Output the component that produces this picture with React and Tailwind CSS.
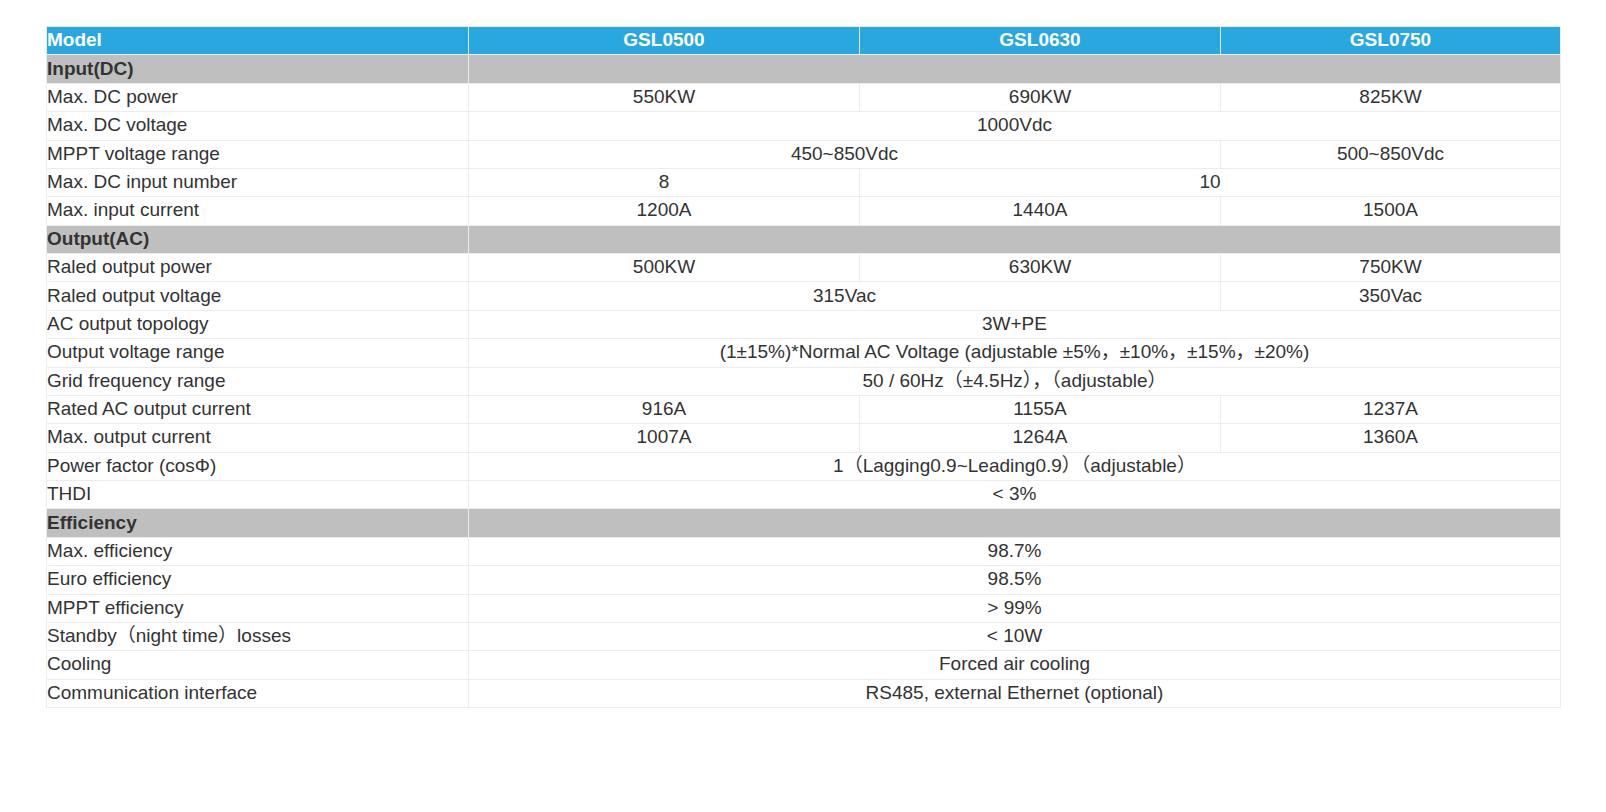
import React from "react";

const rows = [
  { section: "Input(DC)" },
  { label: "Max. DC power", cells: [["550KW", 1], ["690KW", 1], ["825KW", 1]] },
  { label: "Max. DC voltage", cells: [["1000Vdc", 3]] },
  { label: "MPPT voltage range", cells: [["450~850Vdc", 2], ["500~850Vdc", 1]] },
  { label: "Max. DC input number", cells: [["8", 1], ["10", 2]] },
  { label: "Max. input current", cells: [["1200A", 1], ["1440A", 1], ["1500A", 1]] },
  { section: "Output(AC)" },
  { label: "Raled output power", cells: [["500KW", 1], ["630KW", 1], ["750KW", 1]] },
  { label: "Raled output voltage", cells: [["315Vac", 2], ["350Vac", 1]] },
  { label: "AC output topology", cells: [["3W+PE", 3]] },
  {
    label: "Output voltage range",
    cells: [["(1±15%)*Normal AC Voltage (adjustable ±5%，±10%，±15%，±20%)", 3]],
  },
  { label: "Grid frequency range", cells: [["50 / 60Hz（±4.5Hz），（adjustable）", 3]] },
  { label: "Rated AC output current", cells: [["916A", 1], ["1155A", 1], ["1237A", 1]] },
  { label: "Max. output current", cells: [["1007A", 1], ["1264A", 1], ["1360A", 1]] },
  { label: "Power factor (cosΦ)", cells: [["1（Lagging0.9~Leading0.9）（adjustable）", 3]] },
  { label: "THDI", cells: [["< 3%", 3]] },
  { section: "Efficiency" },
  { label: "Max. efficiency", cells: [["98.7%", 3]] },
  { label: "Euro efficiency", cells: [["98.5%", 3]] },
  { label: "MPPT efficiency", cells: [["> 99%", 3]] },
  { label: "Standby（night time）losses", cells: [["< 10W", 3]] },
  { label: "Cooling", cells: [["Forced air cooling", 3]] },
  { label: "Communication interface", cells: [["RS485, external Ethernet (optional)", 3]] },
];

const cell = "border border-[#ececec] px-0 pt-0 pb-[2px] align-middle leading-none";

export default function App() {
  return (
    <div className="min-h-[812px] bg-white pt-[26px] pl-[46px] font-['Liberation_Sans','Noto_Sans_CJK_SC',Arial,sans-serif] text-[19px] text-[#333]">
      <table className="w-[1514px] table-fixed border-collapse">
        <colgroup>
          <col className="w-[422px]" />
          <col className="w-[391px]" />
          <col className="w-[361px]" />
          <col className="w-[340px]" />
        </colgroup>
        <thead>
          <tr className="h-[28.375px] bg-[#29a8e0] font-bold text-white">
            <th className={`${cell} text-left`}>Model</th>
            <th className={`${cell} text-center`}>GSL0500</th>
            <th className={`${cell} text-center`}>GSL0630</th>
            <th className={`${cell} text-center`}>GSL0750</th>
          </tr>
        </thead>
        <tbody>
          {rows.map((row, i) =>
            row.section ? (
              <tr key={i} className="h-[28.375px] bg-[#bfbfbf] font-bold">
                <td className={`${cell} text-left`}>{row.section}</td>
                <td className={cell} colSpan={3}></td>
              </tr>
            ) : (
              <tr key={i} className="h-[28.375px]">
                <td className={`${cell} text-left`}>{row.label}</td>
                {row.cells.map(([text, span], j) => (
                  <td key={j} colSpan={span} className={`${cell} text-center`}>
                    {text}
                  </td>
                ))}
              </tr>
            )
          )}
        </tbody>
      </table>
    </div>
  );
}
